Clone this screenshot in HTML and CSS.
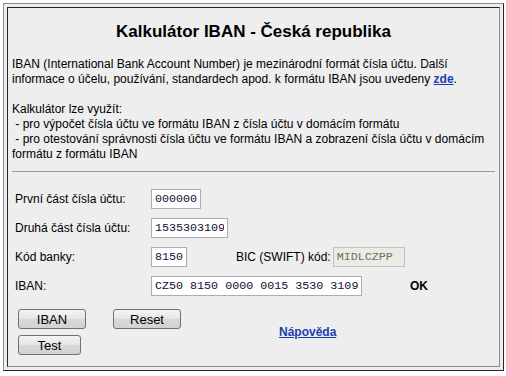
FILE: index.html
```html
<!DOCTYPE html>
<html>
  <head>
    <meta charset="utf-8" />
    <title>Kalkulátor IBAN - Česká republika</title>
    <link rel="stylesheet" href="styles.css">
  </head>
  <body>
    <div class="frame">
      <div class="panel">
        <h1 class="title">Kalkulátor IBAN - Česká republika</h1>
        <p class="intro">
          IBAN (International Bank Account Number) je mezinárodní formát čísla účtu. Další
          informace o účelu, používání, standardech apod. k formátu IBAN jsou uvedeny <a href="#">zde</a>.<br><br>
          Kalkulátor lze využít:<br>
          &nbsp;- pro výpočet čísla účtu ve formátu IBAN z čísla účtu v domácím formátu<br>
          &nbsp;- pro otestování správnosti čísla účtu ve formátu IBAN a zobrazení čísla účtu v domácím
          formátu z formátu IBAN
        </p>
        <hr class="divider">
        <form class="calc">
          <div class="row">
            <label class="label" for="prefix">První část čísla účtu:</label>
            <input class="field field-prefix" id="prefix" value="000000">
          </div>
          <div class="row">
            <label class="label" for="number">Druhá část čísla účtu:</label>
            <input class="field field-number" id="number" value="1535303109">
          </div>
          <div class="row">
            <label class="label" for="bank">Kód banky:</label>
            <input class="field field-bank" id="bank" value="8150">
            <label class="bic-label" for="bic">BIC (SWIFT) kód:</label>
            <input class="field field-bic" id="bic" value="MIDLCZPP" disabled>
          </div>
          <div class="row">
            <label class="label" for="iban">IBAN:</label>
            <input class="field field-iban" id="iban" value="CZ50 8150 0000 0015 3530 3109">
            <span class="status">OK</span>
          </div>
          <div class="actions">
            <div class="buttons">
              <button type="button" class="btn btn-wide">IBAN</button>
              <button type="button" class="btn btn-wide btn-reset">Reset</button>
              <button type="button" class="btn btn-test">Test</button>
            </div>
            <a class="help" href="#">Nápověda</a>
          </div>
        </form>
      </div>
    </div>
  </body>
</html>
```

FILE: styles.css
```css
body {
  margin: 0;
  background-color: #fff;
  font-family: "Liberation Sans", Arial, sans-serif;
  font-size: 12px;
  color: #000;
}

.frame {
  box-sizing: border-box;
  width: 501px;
  height: 368px;
  margin: 3px 0 0 3px;
  padding: 3px;
  background-color: #eeeeee;
  border: 1px solid;
  border-color: #8c8c8c #262626 #262626 #8c8c8c;
}

.panel {
  box-sizing: border-box;
  height: 100%;
  padding: 0 4px;
  border: 1px solid;
  border-color: #262626 #8c8c8c #8c8c8c #262626;
}

.title {
  margin: 14px 0 0;
  font-size: 17px;
  line-height: 20px;
  text-align: center;
}

.intro {
  margin: 15px 0 0;
  line-height: 15px;
}

.intro a,
.help {
  color: #1b3fb0;
  font-weight: bold;
}

.divider {
  margin: 9px 0 0;
  border: 0;
  border-top: 1px solid #9a9a9a;
  height: 0;
}

.calc {
  padding: 12px 0 0 3px;
}

.row {
  display: flex;
  align-items: center;
  height: 29px;
}

.label {
  width: 136px;
}

.field {
  box-sizing: border-box;
  height: 20px;
  padding: 0 3px;
  border: 1px solid #abadb3;
  background-color: #fff;
  font-family: "Liberation Mono", "Courier New", monospace;
  font-size: 11.7px;
  color: #101030;
}

.field-prefix {
  width: 50px;
}

.field-number {
  width: 77px;
}

.field-bank {
  width: 36px;
}

.field-bic {
  width: 72px;
  background-color: #ebebe4;
  border-color: #c2c2c2;
  color: #6d6d6d;
}

.field-iban {
  width: 211px;
}

.bic-label {
  margin-left: 49px;
  margin-right: 2px;
}

.status {
  margin-left: 48px;
  font-weight: bold;
}

.actions {
  display: flex;
  align-items: center;
  margin-top: 9px;
}

.buttons {
  display: grid;
  grid-template-columns: 68px 68px;
  column-gap: 27px;
  row-gap: 6px;
  margin-left: 3px;
}

.btn {
  box-sizing: border-box;
  height: 20px;
  padding: 0;
  border: 1px solid #707070;
  border-radius: 3px;
  background: linear-gradient(#f4f4f4, #e6e6e6 50%, #d8d8d8 51%, #d2d2d2);
  font-family: "Liberation Sans", Arial, sans-serif;
  font-size: 13px;
  color: #000;
}

.btn-test {
  width: 63px;
}

.help {
  margin-left: 98px;
}
```
